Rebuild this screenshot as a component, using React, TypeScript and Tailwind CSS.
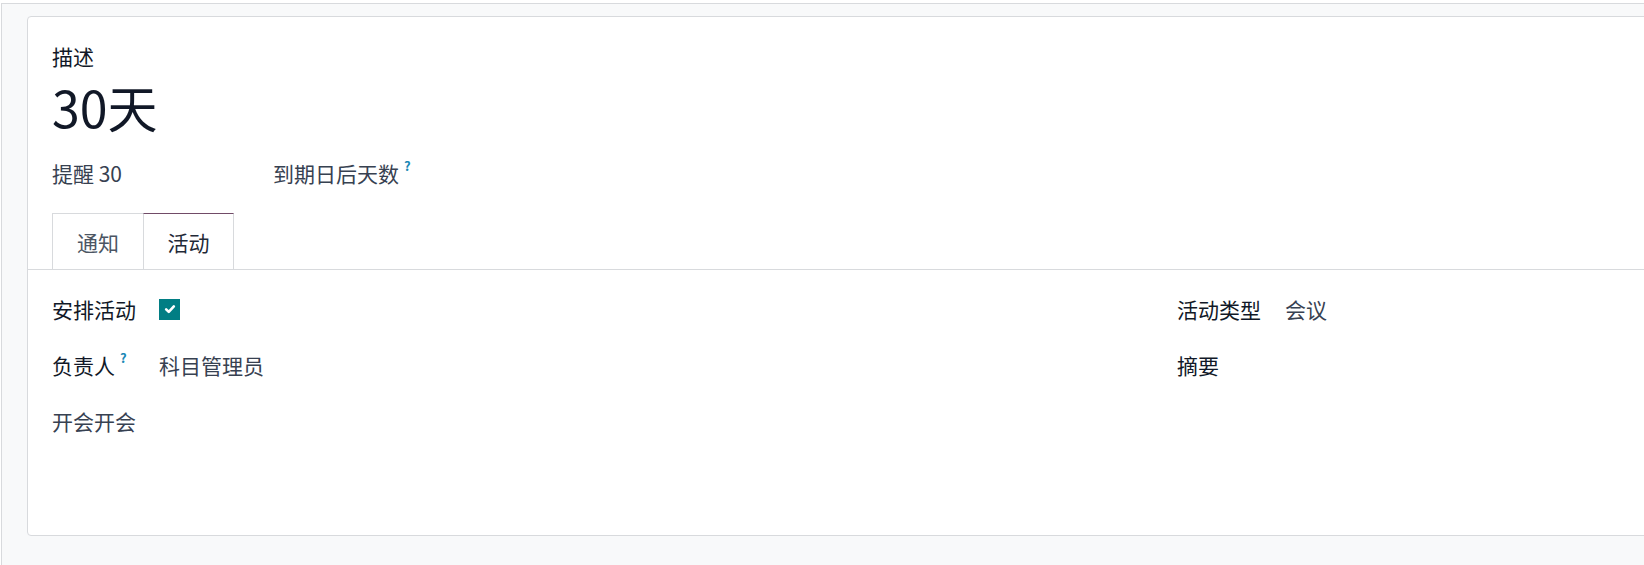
import type { ReactNode } from "react";

function Help() {
  return (
    <span className="ml-[5px] inline-block align-top text-[13px] font-bold leading-[18px] text-[#1a87b5]">
      ?
    </span>
  );
}

function Field({
  label,
  children,
  labelWidth = "w-[107px]",
}: {
  label: ReactNode;
  children?: ReactNode;
  labelWidth?: string;
}) {
  return (
    <div className="flex h-[32px] items-center">
      <div className={`${labelWidth} shrink-0 text-[#111827]`}>{label}</div>
      <div className="flex items-center text-[#374151]">{children}</div>
    </div>
  );
}

function Checkbox() {
  return (
    <span className="flex h-[21px] w-[21px] items-center justify-center bg-[#017e84]">
      <svg viewBox="0 0 16 16" className="h-[14px] w-[14px]" fill="none">
        <path
          d="M3.6 8.4l3 2.9 5.8-6.2"
          stroke="white"
          strokeWidth="3"
          strokeLinecap="round"
          strokeLinejoin="round"
        />
      </svg>
    </span>
  );
}

export default function App() {
  return (
    <div className="h-[565px] w-full overflow-hidden bg-white font-['Noto_Sans_CJK_SC','Noto_Sans',sans-serif] text-[21px] leading-[32px]">
      <div className="ml-[1px] mt-[3px] h-full border-l border-t border-[#d8dadd] bg-[#f8f9fa] pl-[25px] pt-[12px]">
        <div className="-mr-6 h-[520px] rounded-l-[4px] border border-[#d8dadd] bg-white">
          <div className="px-6 pt-[23px]">
            <div className="text-[#111827]">描述</div>
            <h1 className="mt-[5px] text-[50px] leading-[58px] text-[#111827]">30天</h1>
            <div className="mt-[22px] flex text-[#374151]">
              <span className="w-[221px]">提醒 30</span>
              <span>
                到期日后天数
                <Help />
              </span>
            </div>
          </div>

          <div className="mt-6 flex border-b border-[#d8dadd] px-6">
            <button
              type="button"
              className="h-[56px] w-[91px] border-l border-t border-[#d8dadd] text-[#4b5563]"
            >
              通知
            </button>
            <button
              type="button"
              className="h-[56px] w-[91px] border-x border-[#d8dadd] border-t border-t-[#714b67] text-[#1f2937]"
            >
              活动
            </button>
          </div>

          <div className="flex px-6 pt-[23px]">
            <div className="flex w-[1125px] shrink-0 flex-col gap-6">
              <Field label="安排活动">
                <Checkbox />
              </Field>
              <Field
                label={
                  <span>
                    负责人
                    <Help />
                  </span>
                }
              >
                科目管理员
              </Field>
              <div className="h-[32px] text-[#374151]">开会开会</div>
            </div>
            <div className="flex flex-col gap-6">
              <Field label="活动类型" labelWidth="w-[108px]">
                会议
              </Field>
              <Field label="摘要" labelWidth="w-[108px]" />
            </div>
          </div>
        </div>
      </div>
    </div>
  );
}
